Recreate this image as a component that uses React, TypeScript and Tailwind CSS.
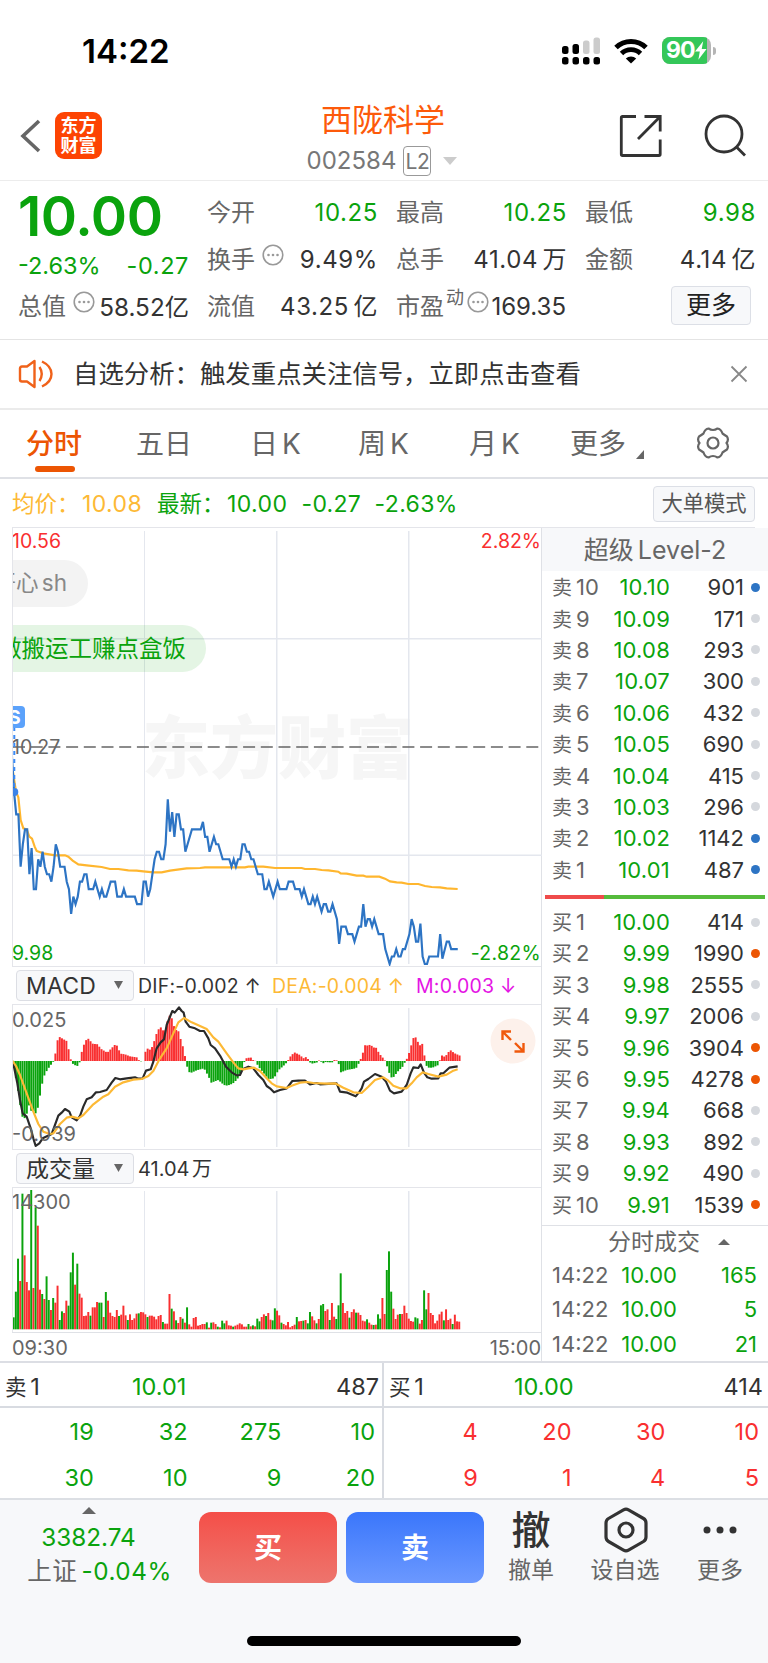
import clsx from "clsx";

const asks = [
  ["10", "10.10", "901", "blue"],
  ["9", "10.09", "171", ""],
  ["8", "10.08", "293", ""],
  ["7", "10.07", "300", ""],
  ["6", "10.06", "432", ""],
  ["5", "10.05", "690", ""],
  ["4", "10.04", "415", ""],
  ["3", "10.03", "296", ""],
  ["2", "10.02", "1142", "blue"],
  ["1", "10.01", "487", "blue"],
];

const bids = [
  ["1", "10.00", "414", ""],
  ["2", "9.99", "1990", "orange"],
  ["3", "9.98", "2555", ""],
  ["4", "9.97", "2006", ""],
  ["5", "9.96", "3904", "orange"],
  ["6", "9.95", "4278", "orange"],
  ["7", "9.94", "668", ""],
  ["8", "9.93", "892", ""],
  ["9", "9.92", "490", ""],
  ["10", "9.91", "1539", "orange"],
];

const trades = [
  ["14:22", "10.00", "165"],
  ["14:22", "10.00", "5"],
  ["14:22", "10.00", "21"],
];

// [minute, ticks below the 10.27 close]
const price =
  "0,1 1,6 2,9 3,9 4,16 5,13 6,11 7,11 8,17 9,13.5 10,19 11,19 12,15 13,16 14,14 15,16 16,17 17,17 18,18 19,16 20,13 21,14 22,16 24,16 25,18 26,19 27,22.3 28,20 29,21 30,20 31,18 32,18 33,17 34,17 35,19 37,19 38,18 39,19 40,20 41,19 42,20 43,20 44,19 45,18 47,18 48,20 50,20 51,19 52,20 56,20 57,21 59,21 60,18 61,18 62,20 63,19 64,17 65,15 66,14 67,14 68,15 69,15 70,13 71,7 72,11.3 73,8.7 74,12 75,9 76,9 77,11 78,11 79,14 80,13 82,11 86,11 87,10 88,12 89,12 90,14 92,12 93,13 94,13 96,15 99,15 100,16 101,15 102,16 103,15 104,15 105,13 106,13 107,14 108,14 109,15 110,15 112,17 114,17 115,19 116,19 117,18 119,20 121,18 122,19 125,19 126,18 128,18 129,19 131,19 132,20 133,19 135,21 136,21 137,20 138,21 139,20 141,22 142,21 143,21 144,22 145,22 146,21 148,23 149,26.3 150,24 152,24 153,25 155,25 156,26 158,24 159,24 160,21 161,24 162,23 163,23 164,24 165,23 167,25 169,25 170,27 172,29 173,28 174,28 175,27 176,28 177,28 178,27 179,27 181,25 182,23 183,24 184,26 185,26 186,23.6 187,28 188,29 189,29 190,28 194,28 195,25 196,28.3 198,26 199,26 200,27 203,27";

const average =
  "38,90 48,155 55,172 62,240 70,265 80,268 88,290 96,296 104,320 110,333 130,340 165,346 195,346 205,350 218,362 235,373 260,376 305,381 330,387 355,387 385,391 410,392 430,394 460,397 485,397 510,392 560,385 600,384 615,382 735,382 745,380 790,380 825,384 905,384 915,387 945,387 965,390 985,391 1015,395 1022,400 1040,401 1070,407 1090,407 1100,410 1138,410 1155,416 1170,424 1190,427 1205,428 1225,432 1255,432 1275,438 1295,441 1320,442 1340,445 1373,447";

const dif =
  "38,303 45,335 52,370 60,420 68,460 80,470 92,505 100,535 107,558 118,550 128,535 155,522 165,495 175,467 185,458 195,447 208,455 215,472 230,481 240,468 250,440 260,418 275,412 288,397 300,396 320,390 335,368 346,354 360,358 380,355 405,352 415,356 428,355 438,332 452,328 460,305 470,265 482,247 492,238 500,195 508,175 517,153 524,158 537,142 545,153 551,158 557,185 568,200 585,205 600,213 612,213 625,235 632,255 645,265 662,290 678,320 695,337 710,346 720,345 728,328 745,320 760,325 775,345 790,360 800,378 810,385 822,397 840,390 860,385 877,363 895,362 915,362 930,373 950,369 960,373 1010,370 1020,395 1042,398 1067,409 1077,397 1085,385 1092,365 1105,357 1125,342 1145,350 1158,365 1170,392 1182,400 1205,395 1220,375 1232,340 1240,322 1255,324 1262,313 1272,338 1282,352 1295,356 1315,355 1322,340 1330,340 1348,323 1373,319";

const dea =
  "38,303 48,318 60,345 80,400 100,455 115,492 130,515 150,522 160,520 180,492 200,473 215,470 235,475 250,465 280,433 310,410 325,403 345,380 370,367 400,359 425,357 445,348 460,333 480,295 500,265 520,220 535,187 552,174 575,187 600,198 620,207 640,232 655,245 680,280 700,307 715,325 730,328 745,325 762,323 780,333 800,355 815,370 830,379 860,384 875,377 900,368 920,366 940,369 980,371 1005,370 1030,383 1060,397 1085,399 1105,380 1125,360 1150,352 1165,362 1180,377 1200,385 1220,385 1235,370 1250,352 1268,337 1285,342 1315,350 1340,344 1360,332 1373,328";

const histogram =
  "38,0 52,-75 58,-115 66,-165 72,-175 80,-160 88,-130 92,-150 98,-148 110,-160 118,-115 130,-50 140,-30 150,-15 158,-5 161,0 165,12 170,55 177,73 186,68 200,60 207,30 213,2 218,-8 231,-16 238,-8 242,15 250,45 262,70 280,50 290,52 305,35 322,25 348,52 362,22 375,20 390,14 410,11 416,3 425,-2 430,0 433,20 441,38 452,33 460,50 468,78 480,104 487,95 494,85 505,130 509,136 518,125 524,95 535,90 545,55 553,30 557,0 561,-15 566,-32 572,-36 590,-28 612,-22 625,-45 634,-65 655,-57 672,-72 682,-74 698,-68 712,-55 728,-20 733,-3 738,8 752,11 760,2 768,0 774,-15 790,-35 805,-55 822,-52 835,-28 850,-15 862,-3 868,10 883,26 900,18 910,8 917,12 925,5 930,-4 935,-8 950,-5 955,2 962,0 968,-8 975,-3 988,-4 998,-4 1002,3 1010,2 1015,0 1020,-35 1040,-27 1068,-22 1075,-10 1080,2 1087,15 1093,48 1100,46 1112,49 1120,40 1127,42 1138,22 1150,8 1156,0 1160,-12 1170,-42 1175,-50 1183,-47 1190,-35 1200,-25 1210,-15 1215,-3 1220,5 1226,20 1232,40 1239,67 1245,75 1252,60 1260,47 1266,55 1272,25 1276,0 1280,-15 1288,-21 1300,-19 1315,-12 1319,0 1323,20 1330,12 1338,16 1348,30 1353,32 1362,24 1380,16";

const volume =
  "g36 g113 g212 r145 g407 r222 r142 r117 g418 r124 g366 r311 r119 g106 r91 g159 g88 r58 g94 r80 r131 g28 g54 r49 r86 g71 g171 g230 r134 g197 r107 r95 r40 r41 r52 g41 r66 r66 r82 g80 g80 r37 g112 r86 r50 r40 r37 r58 g40 r44 r71 r42 g28 r45 r28 r33 r47 g48 r52 r51 r45 g37 r41 r41 r38 r30 r40 r43 g22 r17 r17 r106 g62 r54 g27 r19 r37 g32 r20 g66 r15 r8 r34 r37 r11 r13 r16 r16 g21 r5 g20 r21 r16 g8 r6 g26 g18 r26 r12 r11 g8 r11 r14 r18 r15 r8 r8 g16 r9 g12 r9 g32 g24 r37 r45 g40 r49 r29 g27 g63 r56 r42 g20 r16 r12 r22 r6 r10 r14 g37 r24 r25 g26 r28 g18 g52 r39 r27 g18 r31 g72 g76 r55 r60 g28 r79 r38 g31 g72 g168 r79 r49 r55 g35 r52 r60 g50 r50 r43 r26 r24 g30 r20 r14 g13 r14 g45 g32 r94 r46 g178 g234 g113 r62 r31 r44 g46 r46 r71 r49 r32 r25 r23 g36 g33 r17 r28 g117 g60 r109 r49 r43 r18 r26 r45 r53 g27 r60 r28 r32 g16 r44 r24 r23";

const parse = (s: string) => s.split(" ").map((p) => p.split(",").map(Number));

const pricePoints = parse(price)
  .map(([m, k]) => `${35.5 + 6.59 * m},${21 + 22.45 * k}`)
  .join(" ");

const histKeys = parse(histogram);
const histBars = Array.from({ length: 204 }, (_, i) => {
  const x = 41 + 6.59 * i;
  const n = Math.max(1, histKeys.findIndex((k) => k[0] >= x));
  const [x0, y0] = histKeys[n - 1];
  const [x1, y1] = histKeys[n];
  return { x, v: y0 + ((y1 - y0) * (x - x0)) / (x1 - x0) };
});

const RED = "#f92f30";
const GREEN = "#0aa30d";

function Grid({ height }: { height: number }) {
  return (
    <g fill="#e4e7ee">
      <rect x="132" y="3" width="1" height={height - 5} />
      <rect x="264" y="3" width="1.5" height={height - 5} />
      <rect x="396" y="3" width="1.5" height={height - 5} />
    </g>
  );
}

function PriceChart() {
  return (
    <div className="relative h-[438px] w-[530px] overflow-hidden border-l border-[#e4e5ea]">
      <div className="absolute top-[180px] left-[129px] text-[68px] leading-[80px] font-black whitespace-nowrap text-[#f6f6f6]">
        东方财富
      </div>
      <svg className="absolute top-0 left-[-1px]" width="530" height="438">
        <Grid height={438} />
        <rect x="0" y="110" width="530" height="1.5" fill="#e4e7ee" />
        <rect x="0" y="326.5" width="530" height="1.5" fill="#e4e7ee" />
        <path d="M1 219H530" stroke="#666" strokeWidth="1.3" strokeDasharray="12 5.7" />
        <g transform="translate(-12 212) scale(.33333)" fill="none">
          <polyline points={average} stroke="#ffb62e" strokeWidth="6.5" />
          <polyline points={pricePoints} stroke="#2d74c4" strokeWidth="6.5" />
        </g>
        <path d="M2.3 199V262" stroke="#3b8af5" strokeWidth="2" strokeDasharray="4 4" />
        <circle cx="2.3" cy="264" r="4" fill="#3b83e8" />
      </svg>
      <div className="absolute top-[5px] left-[-1px] text-[19.5px] leading-[16px] text-[#f92f30]">
        10.56
      </div>
      <div className="absolute top-[5px] right-[1px] text-[19.5px] leading-[16px] text-[#f92f30]">
        2.82%
      </div>
      <div className="absolute top-[211px] left-[-1px] text-[19.5px] leading-[16px] text-[#666]">
        10.27
      </div>
      <div className="absolute top-[417px] left-[-1px] text-[19.5px] leading-[16px] text-[#0aa30d]">
        9.98
      </div>
      <div className="absolute top-[417px] right-[1px] text-[19.5px] leading-[16px] tracking-[0.3px] text-[#0aa30d]">
        -2.82%
      </div>
      <div className="absolute top-[32px] right-[454px] flex h-[47px] w-[150px] items-center justify-end rounded-full bg-[#f3f3f3] pr-[21px] text-[22.5px] whitespace-nowrap text-[#888]">
        开心 sh
      </div>
      <div className="absolute top-[97px] right-[336px] flex h-[47px] w-[280px] items-center justify-end rounded-full bg-[#0aa30d]/11 pr-[20px] text-[23.5px] whitespace-nowrap text-[#0aa30d]">
        做搬运工赚点盒饭
      </div>
      <div className="absolute top-[178px] left-[-9px] flex h-[22px] w-[21px] items-center justify-center rounded-[4px] bg-[#5ba2fb] text-[19px] font-bold text-white">
        S
      </div>
    </div>
  );
}

function MacdChart() {
  return (
    <div className="relative h-[144px] w-[530px] overflow-hidden border-l border-[#e4e5ea]">
      <svg className="absolute top-0 left-[-1px]" width="530" height="144">
        <Grid height={144} />
        <g transform="translate(-12 -45) scale(.33333)" fill="none">
          {histBars.map(({ x, v }, i) => (
            <rect
              key={i}
              x={x - 3}
              y={v > 0 ? 303 - v : 303}
              width="5.9"
              height={Math.abs(v)}
              fill={v > 0 ? RED : GREEN}
            />
          ))}
          <polyline points={dif} stroke="#2a2a2a" strokeWidth="6.5" strokeLinejoin="round" />
          <polyline points={dea} stroke="#fdb935" strokeWidth="6.5" strokeLinejoin="round" />
        </g>
        <circle cx="501" cy="36" r="22.5" fill="#fdf1eb" />
        <path
          d="M490.500 35V26.500H499M491 27L499 35M502.500 46.500H511.500V38M511 46L503 38"
          fill="none"
          stroke="#f0590c"
          strokeWidth="2.4"
        />
      </svg>
      <div className="absolute top-[7px] left-[-1px] text-[20px] leading-[16px] text-[#666]">
        0.025
      </div>
      <div className="absolute top-[121px] left-[-1px] text-[20px] leading-[16px] text-[#666]">
        -0.039
      </div>
    </div>
  );
}

function VolumeChart() {
  return (
    <div className="relative h-[144px] w-[530px] overflow-hidden border-l border-[#e4e5ea]">
      <svg className="absolute top-0 left-[-1px]" width="530" height="144">
        <Grid height={144} />
        <g transform="translate(-12 -38) scale(.33333)">
          {volume.split(" ").map((bar, i) => (
            <rect
              key={i}
              x={38 + 6.585 * i}
              y={538 - Number(bar.slice(1))}
              width="5.9"
              height={bar.slice(1)}
              fill={bar[0] === "r" ? RED : GREEN}
            />
          ))}
        </g>
      </svg>
      <div className="absolute top-[6px] left-[-1px] text-[20px] leading-[16px] text-[#666]">
        14300
      </div>
    </div>
  );
}

function Indicator({ name }: { name: string }) {
  return (
    <div className="-mt-[1px] flex h-[31px] w-[118px] items-center justify-between rounded-[4px] border border-[#dcdee4] bg-[#f7f8fa] pt-[2px] pr-[10px] pl-[9px] text-[23px] text-[#333]">
      {name}
      <svg className="mb-[2px]" width="9" height="8">
        <path d="M0 0H9L4.500 8Z" fill="#666" />
      </svg>
    </div>
  );
}

function BookRow({ side, row }: { side: string; row: string[] }) {
  return (
    <div className="flex h-[31.4px] items-center pr-[8px] pl-[10px] text-[22px]">
      <span className="w-[51px] text-[#666]">
        <span className="mr-[4px] text-[20px]">{side}</span>
        {row[0]}
      </span>
      <span className="w-[67px] text-right tracking-[0.2px] text-[#0aa30d]">{row[1]}</span>
      <span className="w-[74px] text-right text-[#333]">{row[2]}</span>
      <span
        className={clsx(
          "ml-auto size-[9px] rounded-full",
          row[3] === "blue" && "bg-[#2d74c4]",
          row[3] === "orange" && "bg-[#ec5503]",
          row[3] === "" && "bg-[#d5d8dd]",
        )}
      />
    </div>
  );
}

function Tip() {
  return (
    <svg className="mb-[9px] ml-[7px] shrink-0" width="22" height="22" fill="#999">
      <circle cx="11" cy="11" r="9.8" fill="none" stroke="#999" strokeWidth="1.6" />
      <circle cx="6.500" cy="11" r="1.3" />
      <circle cx="11" cy="11" r="1.3" />
      <circle cx="15.500" cy="11" r="1.3" />
    </svg>
  );
}

function Stat({
  label,
  value,
  tip,
  green,
}: {
  label: string;
  value: string;
  tip?: boolean;
  green?: boolean;
}) {
  return (
    <div className="flex h-[47px] items-center text-[24px] whitespace-nowrap">
      <span className="-ml-[1px] text-[#666]">{label}</span>
      {tip && <Tip />}
      <span className={clsx("-mr-[1px] ml-auto tracking-[0.6px]", green ? "text-[#0aa30d]" : "text-[#333]")}>
        {value}
      </span>
    </div>
  );
}

function Quote() {
  return (
    <div className="grid h-[159px] grid-cols-[169px_169px_169px_169px] gap-x-5 border-b border-[#e4e4e4] pt-[8px] pl-[19px]">
      <div>
        <div className="-ml-[1px] flex h-[54px] items-center text-[55px] font-semibold tracking-[-0.4px] text-[#0aa30d]">
          10.00
        </div>
        <div className="-ml-[1px] flex h-[40px] items-center justify-between pt-[5px] text-[23.5px] text-[#0aa30d]">
          <span>-2.63%</span>
          <span className="-mr-[1px] tracking-[0.6px]">-0.27</span>
        </div>
        <div className="-mr-[1px] -ml-[1px] flex h-[47px] items-center text-[24px] whitespace-nowrap">
          <span className="text-[#666]">总值</span>
          <Tip />
          <span className="ml-auto pt-[1px] text-[24.3px] text-[#333]">58.52亿</span>
        </div>
      </div>
      <div>
        <Stat label="今开" value="10.25" green />
        <Stat label="换手" value="9.49%" tip />
        <Stat label="流值" value="43.25 亿" />
      </div>
      <div>
        <Stat label="最高" value="10.25" green />
        <Stat label="总手" value="41.04 万" />
        <div className="flex h-[47px] items-center text-[24px] whitespace-nowrap">
          <span className="-ml-[1px] text-[#666]">市盈</span>
          <span className="mb-[18px] ml-[2px] text-[18px] text-[#666]">动</span>
          <span className="-ml-[4px] flex">
            <Tip />
          </span>
          <span className="ml-auto pt-[1px] text-[24px] text-[#333]">169.35</span>
        </div>
      </div>
      <div>
        <Stat label="最低" value="9.98" green />
        <Stat label="金额" value="4.14 亿" />
        <div className="flex h-[44px] items-center justify-end pr-[4px]">
          <div className="flex h-[39px] w-[80px] items-center justify-center rounded-[4px] border border-[#dcdfe6] bg-[#f7f8fa] text-[25px] text-[#222]">
            更多
          </div>
        </div>
      </div>
    </div>
  );
}

function StatusBar() {
  return (
    <div className="flex h-[108px] items-start pt-[36px] pl-[82px]">
      <div className="-mt-[1px] w-[480px] text-[33px] leading-[32px] font-semibold text-black">
        14:22
      </div>
      <svg width="38" height="40" viewBox="562 36 38 40">
        <rect x="562" y="46" width="6.500" height="8" rx="2.500" />
        <rect x="572.500" y="44" width="6.500" height="10" rx="2.500" />
        <rect x="583" y="40.500" width="6.500" height="13.500" rx="2.500" fill="#ccc" />
        <rect x="593.500" y="37.500" width="6.500" height="16.500" rx="2.500" fill="#ccc" />
        <rect x="562" y="57" width="6.500" height="7.500" rx="2.500" />
        <rect x="572.500" y="57" width="6.500" height="7.500" rx="2.500" />
        <rect x="583" y="57" width="6.500" height="7.500" rx="2.500" />
        <rect x="593.500" y="57" width="6.500" height="7.500" rx="2.500" />
      </svg>
      <svg className="mt-[1px] ml-[14px]" width="34" height="28" viewBox="0 0 34 28" fill="none" stroke="#000">
        <path d="M2 10.500A21.500 21.500 0 0 1 32 10.500" strokeWidth="5" />
        <path d="M7.500 16.500A13.500 13.500 0 0 1 26.500 16.500" strokeWidth="4.800" />
        <path d="M17 26.500L11.800 21.500A7.500 7.500 0 0 1 22.200 21.500Z" fill="#000" stroke="none" />
      </svg>
      <div className="mt-[1px] ml-[14px] flex h-[27px] w-[49px] items-center overflow-hidden rounded-[8px] bg-[#b5b5b5]">
        <div className="flex h-full w-[45px] items-center bg-[#34c759] pl-[4px] text-[23px] font-bold tracking-[-1px] text-white">
          90
          <svg className="ml-[1px]" width="12" height="19" viewBox="0 0 12 19">
            <path d="M8.500 0L0 10.500H5L3.500 19L12 8H7Z" fill="#fff" />
          </svg>
        </div>
      </div>
      <div className="mt-[11px] ml-[2px] h-[8px] w-[3px] rounded-r-full bg-[#b5b5b5]" />
    </div>
  );
}

function Header() {
  return (
    <div className="flex h-[73px] border-b border-[#ececec]">
      <svg className="mt-[11px] ml-[20px]" width="22" height="34" fill="none">
        <path d="M19 2L3 17L19 32" stroke="#666" strokeWidth="3.6" />
      </svg>
      <div className="mt-[4px] ml-[13px] flex h-[47px] w-[47px] flex-col items-center justify-center rounded-[9px] bg-[#fd4403] text-[18px] leading-[20px] font-bold text-white">
        <span>东方</span>
        <span>财富</span>
      </div>
      <div className="flex w-[562px] flex-col items-center">
        <div className="-mt-[5px] h-[34px] text-[31px] leading-[34px] text-[#fd5a0a]">西陇科学</div>
        <div className="mt-[8px] flex h-[32px] items-center pr-[2px] text-[24px] text-[#777]">
          <span>002584</span>
          <span className="ml-[7px] flex h-[30px] w-[28px] items-center justify-center rounded-[4px] border-[1.5px] border-[#999] text-[21px] tracking-[-0.5px]">
            L2
          </span>
          <svg className="ml-[12px]" width="14" height="8">
            <path d="M0 0H14L7 8Z" fill="#ccc" />
          </svg>
        </div>
      </div>
      <svg
        className="-ml-[45px] mt-[6px] shrink-0"
        width="44"
        height="44"
        fill="none"
        stroke="#333"
        strokeWidth="2.800"
      >
        <path d="M17 2.500H3.500Q2.300 2.500 2.300 3.700V40.300Q2.300 41.500 3.500 41.500H40Q41.200 41.500 41.200 40.300V25.500" />
        <path d="M25.500 2.500H41.200V17.500M41 2.700L19 25" />
      </svg>
      <svg
        className="mt-[6px] ml-[41px] shrink-0"
        width="44"
        height="44"
        fill="none"
        stroke="#333"
        strokeWidth="2.800"
      >
        <circle cx="20" cy="20" r="18" />
        <path d="M32.500 33L41 41.500" />
      </svg>
    </div>
  );
}

function Tabs() {
  return (
    <div className="flex h-[69px] items-start border-b-2 border-[#dfe1e6] pt-[16px] pl-[26px] text-[28px] leading-[36px] [word-spacing:-4px] whitespace-nowrap text-[#666]">
      <div className="flex w-[110px] flex-col font-medium text-[#ec5503]">
        分时
        <span className="mt-[4px] ml-[9px] h-[6px] w-[40px] rounded-full bg-[#ec5503]" />
      </div>
      <div className="w-[114px]">五日</div>
      <div className="w-[108px]">日 K</div>
      <div className="w-[111px]">周 K</div>
      <div className="w-[101px]">月 K</div>
      <div className="flex w-[126px] items-end">
        更多
        <svg className="mb-[3px] ml-[10px]" width="8" height="9">
          <path d="M8 0V9H0Z" fill="#666" />
        </svg>
      </div>
      <svg width="34" height="34" viewBox="0 0 34 34" fill="none" stroke="#666" strokeWidth="2.200">
        <path
          d="M12.500 2.500Q17 5.500 21.500 2.500Q25 3 26.500 7.500Q28.500 9 31 10.500Q33 14 30.500 17Q33 20 31 23.500Q28.500 25 26.500 26.500Q25 31 21.500 31.500Q17 28.500 12.500 31.500Q9 31 7.500 26.500Q5.500 25 3 23.500Q1 20 3.500 17Q1 14 3 10.500Q5.500 9 7.500 7.500Q9 3 12.500 2.500Z"
          strokeLinejoin="round"
        />
        <circle cx="17" cy="17" r="5.500" />
      </svg>
    </div>
  );
}

function Queue({ rows, color }: { rows: string[][]; color: string }) {
  return (
    <div className={clsx("grid w-[375px] grid-cols-4 pt-[1px] text-right text-[23.5px] leading-[46px]", color)}>
      {rows.flat().map((n, i) => (
        <span key={i}>{n}</span>
      ))}
    </div>
  );
}

function BottomBar() {
  return (
    <div className="flex h-[163px] flex-col items-center bg-[#f7f8fa]">
      <div className="flex h-[136px] w-full">
        <div className="flex w-[199px] flex-col items-center text-[24.3px] text-[#0aa30d]">
          <svg className="mt-[7px] mr-[21px]" width="14" height="7">
            <path d="M0 7H14L7 0Z" fill="#666" />
          </svg>
          <span className="mt-[7px] mr-[22px] leading-[32px]">3382.74</span>
          <span className="leading-[36px] tracking-[0.5px]">
            <span className="text-[24.5px] text-[#666]">上证</span> -0.04%
          </span>
        </div>
        <div className="mt-[12px] flex h-[71px] w-[138px] items-center justify-center rounded-[12px] bg-linear-to-b from-[#f44e48] to-[#ed746d] text-[28px] font-bold text-white">
          买
        </div>
        <div className="mt-[12px] ml-[9px] flex h-[71px] w-[138px] items-center justify-center rounded-[12px] bg-linear-to-b from-[#3a76fb] to-[#6b98ff] text-[28px] font-bold text-white">
          卖
        </div>
        <div className="ml-[17px] flex w-[60px] flex-col items-center text-[#666]">
          <span className="mt-[7px] text-[39px] leading-[46px] font-medium text-[#333]">撤</span>
          <span className="mt-[1px] text-[23px] leading-[32px]">撤单</span>
        </div>
        <div className="ml-[24px] flex w-[80px] flex-col items-center text-[#666]">
          <svg className="mt-[7px] ml-[1px]" width="44" height="46" fill="none" stroke="#333" strokeWidth="3.200">
            <path
              d="M19.500 2.800Q22 1.400 24.500 2.800L39.500 11.500Q42 13 42 16V30Q42 33 39.500 34.500L24.500 43.200Q22 44.600 19.500 43.200L4.500 34.500Q2 33 2 30V16Q2 13 4.500 11.500Z"
            />
            <circle cx="22" cy="23" r="7" />
          </svg>
          <span className="mt-[1px] text-[23px] leading-[32px]">设自选</span>
        </div>
        <div className="ml-[25px] flex w-[60px] flex-col items-center pt-[26px] text-[#666]">
          <svg width="34" height="8" fill="#333">
            <circle cx="4" cy="4" r="3.500" />
            <circle cx="17" cy="4" r="3.500" />
            <circle cx="30" cy="4" r="3.500" />
          </svg>
          <span className="mt-[20px] text-[23px] leading-[32px]">更多</span>
        </div>
      </div>
      <div className="h-[10px] w-[274px] rounded-full bg-black" />
    </div>
  );
}

export default function App() {
  return (
    <div className="h-[1663px] w-[768px] overflow-hidden bg-white font-['Inter','Noto_Sans_CJK_SC',sans-serif] leading-none [word-spacing:-3px]">
      <StatusBar />
      <Header />
      <Quote />
      <div className="flex h-[70px] items-center border-b-2 border-[#ebebeb] pr-[20px] pl-[18px]">
        <svg width="36" height="30" fill="none" stroke="#f0621a" strokeWidth="2.400">
          <path d="M16.500 2L9 7.500H4Q2 7.500 2 9.500V20.500Q2 22.500 4 22.500H9L16.500 28Z" strokeLinejoin="round" />
          <path d="M21.500 8Q26 15 21.500 22M24 2.500Q33.500 7 33.500 15Q33.500 23 24 27.500" />
        </svg>
        <span className="ml-[19px] text-[25.4px] text-[#333]">
          自选分析：触发重点关注信号，立即点击查看
        </span>
        <svg className="ml-auto" width="18" height="18" stroke="#888" strokeWidth="1.800">
          <path d="M1.500 1.500L16.500 16.500M16.500 1.500L1.500 16.500" />
        </svg>
      </div>
      <Tabs />
      <div className="mr-[13px] ml-[12px] flex h-[49px] items-center border-b border-[#e4e5ea] pt-[2px] text-[23px] whitespace-nowrap text-[#0aa30d]">
        <span className="w-[70px] text-[22.5px] text-[#fdb935]">均价：</span>
        <span className="w-[75px] tracking-[0.4px] text-[#fdb935]">10.08</span>
        <span className="w-[70px] text-[22.5px]">最新：</span>
        <span className="w-[74.5px] tracking-[0.4px]">10.00</span>
        <span className="w-[73px] tracking-[0.3px]">-0.27</span>
        <span className="tracking-[0.4px]">-2.63%</span>
        <div className="ml-auto flex h-[36px] w-[102px] items-center justify-center rounded-[4px] border border-[#dcdfe6] bg-[#f7f8fa] text-[21.3px] text-[#555]">
          大单模式
        </div>
      </div>

      <div className="flex h-[835px] border-b-2 border-[#dcdee4]">
        <div className="w-[542px] border-r border-[#dfe1e6] pl-[12px]">
          <PriceChart />
          <div className="flex h-[39px] items-center border-y border-[#e4e5ea] pl-[4px] text-[19.5px] tracking-[0.2px] [word-spacing:0] whitespace-nowrap">
            <Indicator name="MACD" />
            <span className="ml-[4px] w-[134px] pt-[2px] text-[#333]">DIF:-0.002 ↑</span>
            <span className="w-[144px] pt-[2px] text-[#fdb935]">DEA:-0.004 ↑</span>
            <span className="pt-[2px] text-[#e414e4]">M:0.003 ↓</span>
          </div>
          <MacdChart />
          <div className="flex h-[39px] items-center border-y border-[#e4e5ea] pl-[4px] text-[20px] text-[#333]">
            <Indicator name="成交量" />
            <span className="ml-[4px]">41.04 万</span>
          </div>
          <VolumeChart />
          <div className="flex h-[29px] items-center justify-between border-t border-[#dfe1e6] pt-[2px] text-[20px] text-[#666]">
            <span>09:30</span>
            <span>15:00</span>
          </div>
        </div>
        <div className="w-[226px]">
          <div className="flex h-[43px] items-center justify-center bg-[#f7f8fa] pt-[1px] text-[25px] text-[#666]">
            超级 Level-2
          </div>
          <div className="pt-[0.5px]">
            {asks.map((row) => (
              <BookRow key={row[0]} side="卖" row={row} />
            ))}
          </div>
          <div className="mx-[3px] mt-[10px] mb-[7px] flex h-[4px]">
            <div className="w-[59px] bg-[#ef4b4b]" />
            <div className="flex-1 bg-[#55bb3c]" />
          </div>
          {bids.map((row) => (
            <BookRow key={row[0]} side="买" row={row} />
          ))}
          <div className="mt-[5px] flex h-[32px] items-center justify-center border-t border-[#dfe1e6] pt-[1px] pl-[28px] text-[23px] text-[#666]">
            分时成交
            <svg className="ml-[18px]" width="12" height="6">
              <path d="M0 6H12L6 0Z" fill="#666" />
            </svg>
          </div>
          {trades.map((t, i) => (
            <div key={i} className="flex h-[34.600px] items-center pr-[11px] pl-[10px] text-[22px] text-[#0aa30d]">
              <span className="w-[59px] text-[#666]">{t[0]}</span>
              <span className="w-[66px] text-right">{t[1]}</span>
              <span className="ml-auto">{t[2]}</span>
            </div>
          ))}
        </div>
      </div>

      <div className="flex h-[45px] items-center border-b-2 border-[#d8dbe1] text-[23.5px] text-[#333]">
        <div className="flex h-full w-[384px] items-center border-r-2 border-[#d8dbe1] pt-[5px] pr-[3px] pl-[5px]">
          <span className="w-[127px]">
            <span className="text-[21.5px]">卖</span> 1
          </span>
          <span className="text-[#0aa30d]">10.01</span>
          <span className="ml-auto">487</span>
        </div>
        <div className="flex h-full w-[384px] items-center pt-[5px] pr-[5px] pl-[5px]">
          <span className="w-[125px]">
            <span className="text-[21.5px]">买</span> 1
          </span>
          <span className="text-[#0aa30d]">10.00</span>
          <span className="ml-auto">414</span>
        </div>
      </div>
      <div className="flex h-[92px] border-b-2 border-[#dcdfe4]">
        <div className="w-[384px] border-r-2 border-[#d8dbe1]">
          <Queue rows={[["19", "32", "275", "10"], ["30", "10", "9", "20"]]} color="text-[#0aa30d]" />
        </div>
        <Queue rows={[["4", "20", "30", "10"], ["9", "1", "4", "5"]]} color="text-[#f92f30]" />
      </div>
      <BottomBar />
    </div>
  );
}
